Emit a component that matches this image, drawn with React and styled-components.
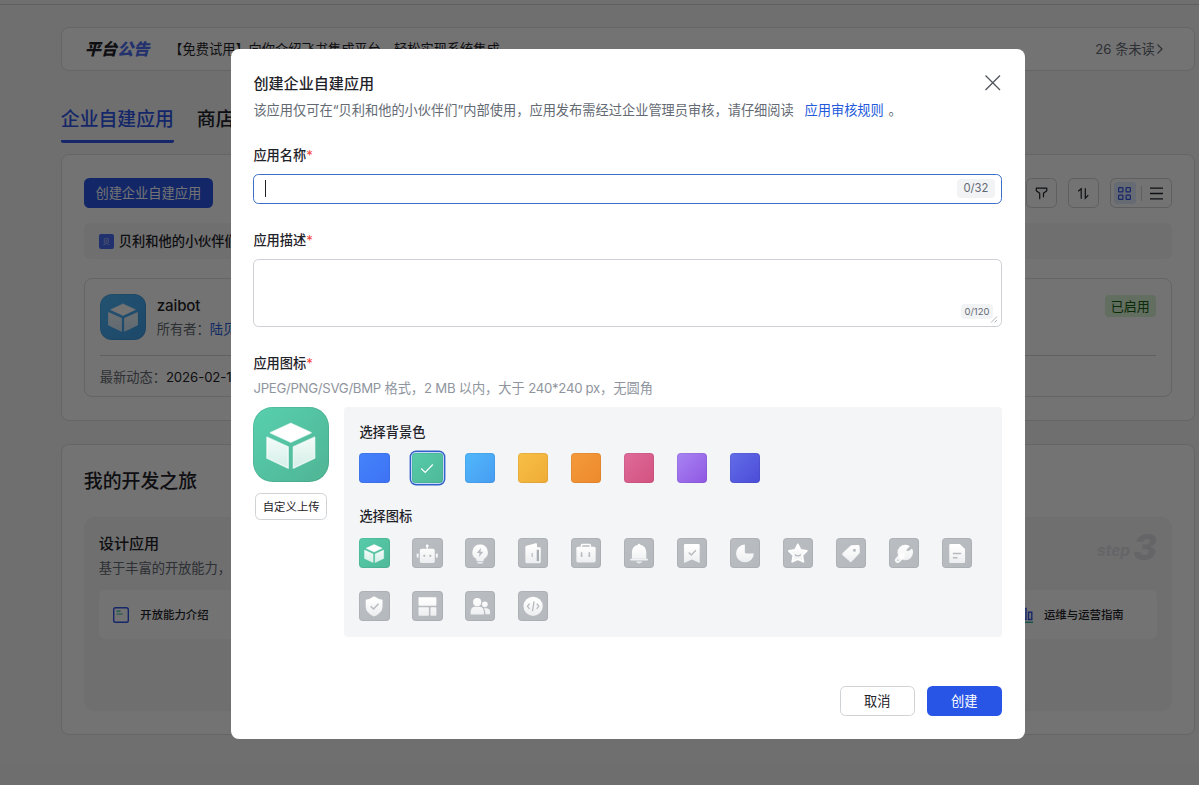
import React from "react"
import styled, { createGlobalStyle, css } from "styled-components"

const GlobalStyle = createGlobalStyle`
    * {
        box-sizing: border-box;
    }
    body {
        margin: 0;
        overflow: hidden;
        font-family: Inter, "Noto Sans CJK SC", sans-serif;
        font-size: 13.23px;
        line-height: 20px;
        color: #1f2329;
        background: #f2f3f5;
    }
    h1, h2, h3, h4, p {
        margin: 0;
        font-weight: 500;
    }
    button {
        font: inherit;
        padding: 0;
        cursor: pointer;
    }
`
const StyledPage = styled.div`
    position: relative;
    height: 785px;
    overflow: hidden;
    background: #f5f5f6;
`
const StyledTopBar = styled.div`
    height: 5px;
    border-bottom: 1px solid #d0d3d6;
`
const StyledMain = styled.main`
    width: 1134px;
    margin: 22px 0 0 60.8px;
`
const StyledCard = styled.section`
    height: ${ props => props.$height }px;
    margin-bottom: ${ props => props.$space || 0 }px;
    padding: ${ props => props.$padding || "23px 22px" };
    border: 1px solid #dee0e3;
    border-radius: 8px;
    background: #fff;
`
const StyledNotice = styled(StyledCard)`
    display: flex;
    align-items: center;
    padding: 0 30px 0 23px;
`
const StyledNoticeTitle = styled.h3`
    width: 84.5px;
    font-size: 16.2px;
    font-weight: 800;
    font-style: italic;
    white-space: nowrap;

    span {
        color: #4e6ef2;
    }
`
const StyledUnread = styled.span`
    display: flex;
    align-items: center;
    margin-left: auto;
    color: #646a73;
`
const StyledTabs = styled.nav`
    display: flex;
    gap: 23px;
    height: 39px;
    margin-bottom: 11px;
`
const StyledTab = styled.div`
    padding-top: 1px;
    font-size: 18.85px;
    line-height: 30px;
    font-weight: 500;
    border-bottom: 3px solid ${ props => props.$active ? "#2f54eb" : "transparent" };
    border-radius: 2px;
    color: ${ props => props.$active ? "#3055e8" : "#1f2329" };
`
const StyledToolbar = styled.div`
    display: flex;
    height: 30px;
    gap: 11px;
    margin-bottom: 15px;
`
const StyledPrimary = styled.button`
    width: ${ props => props.$width }px;
    height: 30px;
    border: 0;
    border-radius: 5.5px;
    background: #2955e7;
    color: #fff;
`
const StyledOutline = styled.button`
    width: ${ props => props.$width }px;
    height: ${ props => props.$height || 30 }px;
    border: 1px solid #d0d3d6;
    border-radius: 5.5px;
    background: #fff;
    color: #1f2329;
    font-size: ${ props => props.$small ? "11.4px" : "inherit" };
    line-height: 16px;
`
const StyledTools = styled.div`
    display: flex;
    gap: 11px;
    margin-left: auto;
`
const StyledTool = styled.div`
    display: flex;
    align-items: center;
    justify-content: center;
    width: ${ props => props.$width || 31 }px;
    height: 30px;
    border: 1px solid #d0d3d6;
    border-radius: 5.5px;
`
const StyledView = styled.div`
    display: flex;
    align-items: center;
    justify-content: center;
    width: 22px;
    height: 22px;
    border-radius: 4px;
    background: ${ props => props.$active ? "#e1eaff" : "none" };
`
const StyledSplit = styled.i`
    width: 1px;
    height: 15px;
    margin: 0 4px 0 5px;
    background: #d0d3d6;
`
const StyledTenant = styled.div`
    display: flex;
    align-items: center;
    gap: 5px;
    height: 36px;
    margin-bottom: 19px;
    padding-left: 15px;
    border-radius: 6px;
    background: #f5f6f7;
    font-weight: 500;
`
const StyledTenantLogo = styled.span`
    width: 15px;
    height: 15px;
    border-radius: 2px;
    background: #4a6cf3;
    color: #b9c8ff;
    font-size: 7px;
    line-height: 15px;
    text-align: center;
`
const StyledAppCard = styled.div`
    height: 119px;
    padding: 15px 15px 0;
    border: 1px solid #dee0e3;
    border-radius: 8px;
`
const StyledAppHead = styled.div`
    display: flex;
    height: 62px;
    border-bottom: 1px solid #d3d5d8;
`
const StyledAppInfo = styled.div`
    padding: 1px 0 0 11px;
    color: #646a73;

    h3 {
        font-size: 15.1px;
        line-height: 22px;
        letter-spacing: -.15px;
        color: #1f2329;
    }
    p {
        margin-top: 2px;
        font-weight: 400;
    }
    span {
        color: #245bdb;
    }
`
const StyledTag = styled.span`
    width: 51px;
    height: 22px;
    margin: 1px 0 0 auto;
    border-radius: 4px;
    background: #d9f3d5;
    color: #186010;
    font-size: 13px;
    line-height: 22px;
    text-align: center;
`
const StyledRecent = styled.p`
    margin-top: 11px;
    color: #646a73;

    && {
        font-weight: 400;
    }
    span {
        color: #1f2329;
        letter-spacing: -.1px;
    }
`
const StyledJourneyTitle = styled.h2`
    height: 49px;
    font-size: 18.9px;
    line-height: 28px;
`
const StyledSteps = styled.div`
    display: grid;
    grid-template-columns: repeat(3, 1fr);
    gap: 15px;
`
const StyledStep = styled.div`
    height: 194px;
    padding: 15px;
    border-radius: 11px;
    background: #f5f5f6;
`
const StyledStepHead = styled.div`
    display: flex;
    justify-content: space-between;
    height: 58px;
    white-space: nowrap;

    h3 {
        font-size: 15.1px;
        line-height: 24px;
    }
    p {
        margin-top: 2px;
        color: #646a73;
        font-weight: 400;
    }
`
const StyledStepNo = styled.div`
    display: flex;
    align-items: center;
    gap: 3px;
    height: 30px;
    font-style: italic;
    font-weight: 700;
    font-size: 15.5px;
    line-height: 30px;
    color: #dfe1e5;

    span {
        padding-top: 8px;
    }
    b {
        font-size: 36px;
        font-weight: 800;
    }
`
const StyledGuides = styled.div`
    display: grid;
    grid-template-columns: 1fr 1fr;
    gap: 14px;
`
const StyledGuide = styled.div`
    display: flex;
    align-items: center;
    gap: 10px;
    height: 49px;
    padding-left: 13.5px;
    border-radius: 6px;
    background: #fff;
    font-size: 11.4px;
    font-weight: 500;
    white-space: nowrap;
`

// dialog
const StyledMask = styled.div`
    position: absolute;
    inset: 0;
    padding: 49px 0 0 231px;
    background: rgba(0, 0, 0, .55);
`
const StyledDialog = styled.div`
    display: flex;
    flex-direction: column;
    width: 794px;
    height: 690px;
    padding: 23.3px 23px 23px 22.4px;
    border-radius: 8px;
    background: #fff;
`
const StyledDialogHead = styled.header`
    display: flex;
    justify-content: space-between;
    height: 72px;

    h2 {
        font-size: 15.1px;
        line-height: 23px;
    }
    p {
        margin-top: 5px;
        color: #646a73;
        font-weight: 400;
        white-space: nowrap;
    }
    a {
        margin: 0 1px 0 7px;
        color: #245bdb;
    }
`
const StyledLabel = styled.label`
    height: 23px;
    font-weight: 500;
    line-height: 23px;

    span {
        color: #f54a45;
        font-weight: 400;
    }
`
const fieldStyle = css`
    display: flex;
    justify-content: flex-end;
    border: 1px solid #cdd0d4;
    border-radius: 5.5px;
`
const StyledInput = styled.div`
    ${fieldStyle}
    align-items: center;
    height: 30px;
    margin: 6.6px 0 25.4px;
    padding: 0 6.5px 0 11px;
    border-color: #3c6fc9;
`
const StyledCaret = styled.i`
    width: 1px;
    height: 17px;
    margin-right: auto;
    background: #1f2329;
`
const StyledTextarea = styled.div`
    ${fieldStyle}
    align-items: flex-end;
    height: 68px;
    margin: 6.6px 0 25.4px;
    padding: 0 3.5px 3px 0;
`
const StyledCount = styled.span`
    padding: 0 ${ props => props.$small ? 3 : 6 }px;
    border-radius: 4px;
    background: #f2f3f5;
    color: #646a73;
    font-size: ${ props => props.$small ? 9.5 : 11.3 }px;
    line-height: ${ props => props.$small ? 15 : 19 }px;
    margin-bottom: ${ props => props.$small ? 4 : 0 }px;
`
const StyledHint = styled.p`
    height: 31.3px;
    padding-top: 3px;
    color: #8f959e;

    && {
        font-weight: 400;
    }
    span {
        letter-spacing: -.3px;
    }
`
const StyledIconArea = styled.div`
    display: flex;
    align-items: flex-start;
    gap: 15px;
`
const StyledPreview = styled.div`
    display: flex;
    flex-direction: column;
    align-items: center;
    gap: 11px;
    width: 75.6px;
`
const StyledAppIcon = styled.div`
    width: ${ props => props.$size }px;
    height: ${ props => props.$size }px;
    flex: none;
    border-radius: ${ props => props.$size * 0.26 }px;
    background: ${ props => props.$background };
    box-shadow: inset 0 0 0 1px rgba(0, 0, 0, .07);

    svg {
        display: block;
    }
`
const StyledPicker = styled.div`
    flex: 1;
    height: 230px;
    padding: 13px 15px 0 15.4px;
    border-radius: 4px;
    background: #f4f5f7;

    h4 {
        line-height: 24px;
        margin-bottom: 9.6px;
    }
`
const StyledSwatches = styled.div`
    display: flex;
    flex-wrap: wrap;
    gap: 22.7px;
    margin-bottom: 21px;
`
const StyledSwatch = styled.div`
    display: flex;
    align-items: center;
    justify-content: center;
    width: 30.24px;
    height: 30.24px;
    border-radius: 4px;
    background: linear-gradient(135deg, ${ props => props.$from }, ${ props => props.$to });
    box-shadow: inset 0 0 0 1px rgba(0, 0, 0, .06)${ props => props.$active ? ", 0 0 0 1px #c5d8fb, 0 0 0 2.4px #2f62c8" : "" };

    svg {
        display: block;
    }
`
const StyledFooter = styled.footer`
    display: flex;
    justify-content: flex-end;
    gap: 11.5px;
    margin-top: auto;
`

const CUT = "#b7bbc0"

const Cube = () => (
    <g strokeWidth=".6" strokeLinejoin="round" stroke="#fff" strokeOpacity=".7">
        <path d="M16 6.9l8.6 4-8.6 4-8.6-4z" fill="#fff" />
        <path d="M5.9 12.8l9 4.1v9l-9-4.3zM17.1 16.9l9-4.1v8.8l-9 4.3z" />
    </g>
)
const glyphs = {
    cube: <Cube />,
    robot: <>
        <path d="M15.5 9h1.2v3h-1.2z" />
        <circle cx="16.1" cy="8.4" r="1.5" />
        <rect x="8.3" y="11.4" width="15.8" height="15" rx="1.8" />
        <rect x="5" y="16.3" width="2" height="4.6" rx=".8" />
        <rect x="25.3" y="16.3" width="2" height="4.6" rx=".8" />
        <circle cx="13" cy="18.8" r="1.2" fill={CUT} />
        <circle cx="19.4" cy="18.8" r="1.2" fill={CUT} />
    </>,
    bulb: <>
        <path d="M16 7a8.1 8.1 0 0 1 4.3 15l-.8 2.6h-7l-.8-2.6A8.1 8.1 0 0 1 16 7z" />
        <rect x="13" y="25.4" width="6" height="1.6" rx=".8" />
        <path d="M17 10.4l-4.5 5.4h2.9l-.7 4.3 4.8-5.6h-3.1z" fill={CUT} />
    </>,
    door: <>
        <path d="M9 8.1l9.7-2.5q1.4-.3 1.4 1.1v3.1h2.800q1.200 0 1.200 1.200v14.400q0 1.200-1.200 1.200H9q-1.200 0-1.200-1.200V9.500q0-1.100 1.200-1.400z" />
        <path d="M19.8 12.4h2.4v12h-2.4z" fill="#a9adb2" />
        <path d="M15 16.3v3.4" stroke={CUT} strokeWidth="1.3" strokeLinecap="round" />
    </>,
    briefcase: <>
        <path d="M11 9.5V8q0-1.1 1.1-1.1h7.3q1.1 0 1.1 1.1v1.5" fill="none" stroke="#fff" strokeWidth="1.5" />
        <rect x="5.7" y="9.2" width="20.4" height="16.6" rx="1.6" />
        <path d="M11.2 15v5M19.4 15v5" stroke={CUT} strokeWidth="1.7" />
    </>,
    bell: <>
        <path d="M16 6.2q1.2 0 1.5 1.1c4.1.7 6.1 4 6.1 8v6.7H8.4v-6.7c0-4 2-7.3 6.1-8Q14.8 6.2 16 6.2z" />
        <rect x="6.4" y="21.9" width="19" height="1.8" rx=".9" />
        <path d="M12.6 25h6.8q-.8 1.9-3.4 1.9T12.6 25z" />
    </>,
    bookmark: <>
        <path d="M8.6 6.4h14.2q1.2 0 1.2 1.2v18.9l-8.2-3.7-8.4 3.7V7.6q0-1.2 1.2-1.2z" />
        <path d="M12.4 15.3l2.8 2.7 4.7-5" fill="none" stroke={CUT} strokeWidth="1.5" />
    </>,
    pie: <path d="M15.7 6.9v8.2q0 1.2 1.2 1.2h8.3A9.4 9.4 0 1 1 15.7 6.9z" />,
    star: <>
        <path d="M15.7 6.7l2.9 5.9 6.6 1-4.8 4.7 1.2 6.9-5.9-2.9-5.9 2.9 1.2-6.9-4.8-4.7 6.6-1z" stroke="#fff" strokeWidth="1.9" strokeLinejoin="round" />
        <path d="M12.5 17.4q3.2 3.1 6.5 0" fill="none" stroke={CUT} strokeWidth="1.3" />
    </>,
    tag: <>
        <path d="M16.7 7.7l6.6-.3q1.5 0 1.6 1.5l.3 6q0 .8-.5 1.4l-8 8.7q-1.1 1.2-2.2 0l-7.4-6.8q-1.2-1.1 0-2.2l8.2-7.8q.6-.5 1.4-.5z" />
        <circle cx="19.5" cy="13" r="1.6" fill={CUT} />
    </>,
    wrench: <>
        <circle cx="17.2" cy="15.3" r="8.2" />
        <path d="M13.5 18.8l-4.2 4.6" stroke="#fff" strokeOpacity=".85" strokeWidth="6" strokeLinecap="round" />
        <path d="M18.4 13.7q.2-2 1.8-3.2l3.2-3.2 2.4 2.4-3.3 3.1q-1.7 1.4-4.1.9z" fill={CUT} />
        <circle cx="9.4" cy="23.5" r=".8" fill={CUT} />
    </>,
    doc: <>
        <path d="M8.9 6.4h9.9l5.6 5.3v13.6q0 1.2-1.2 1.2H8.9q-1.2 0-1.2-1.2V7.6q0-1.2 1.2-1.2z" />
        <path d="M11.5 16.4h8.8M11.5 20.9h4.8" stroke={CUT} strokeWidth="1.4" />
    </>,
    shield: <>
        <path d="M16 5.5q4.2 3 8.9 3.7v7.2q0 6.9-8.9 10.5-8.9-3.6-8.9-10.5V9.2Q11.8 8.5 16 5.5z" />
        <path d="M12.3 16.2l3.1 2.9 5.3-5.5" fill="none" stroke={CUT} strokeWidth="1.6" />
    </>,
    layout: <>
        <rect x="6.9" y="6.6" width="18.9" height="8.9" rx=".8" />
        <rect x="6.9" y="17.1" width="11" height="9" rx=".8" />
        <rect x="19.5" y="17.1" width="6.3" height="9" rx=".8" />
    </>,
    people: <>
        <circle cx="12.9" cy="11.8" r="4.3" />
        <circle cx="21" cy="14.1" r="3" />
        <path d="M5.9 24v-1.2q0-6 5-6h4.2q5 0 5 6V24q0 1-1 1H6.9q-1 0-1-1z" />
        <path d="M21.4 24.6v-1.9q0-2.7-1.5-4.4h2.2q4.5 0 4.5 4.3v1.2q0 .8-.8.8z" />
    </>,
    code: <>
        <circle cx="16" cy="16.2" r="10.2" />
        <path d="M12.2 13.4L10 16.2l2.2 2.8M19.8 13.4l2.2 2.8-2.2 2.8M17 10.9l-1.7 10.5" fill="none" stroke={CUT} strokeWidth="1.4" />
    </>,
}

const Glyph = ({ name, size = 30.24 }) => (
    <svg width={size} height={size} viewBox="0 0 32 32">
        <defs>
            <linearGradient id={"fade-" + name} gradientUnits="userSpaceOnUse" x1="0" y1="8" x2="0" y2="28">
                <stop stopColor="#fff" />
                <stop offset="1" stopColor="#fff" stopOpacity=".72" />
            </linearGradient>
        </defs>
        <g fill={`url(#fade-${name})`}>{glyphs[name]}</g>
    </svg>
)

const colors = [
    ["#4583fb", "#3d72f4"],
    ["#56cbaa", "#4fb998"],
    ["#50b8fb", "#489cf2"],
    ["#f7bf45", "#efac37"],
    ["#f49a3b", "#ec8a2c"],
    ["#df6b9a", "#d2527f"],
    ["#a883f3", "#8f58e2"],
    ["#646de9", "#4a4cd6"],
]
const greens = colors[1]

const Toolbar = () => (
    <StyledToolbar>
        <StyledPrimary $width={129}>创建企业自建应用</StyledPrimary>
        <StyledTools>
            <StyledTool>
                <svg width="15" height="15" viewBox="0 0 15 15" fill="none" stroke="#1f2329" strokeWidth="1.2" strokeLinejoin="round" strokeLinecap="round">
                    <path d="M5.7 12.7V7.2L2.3 4.7V2.2h10.5v2.5L9.5 7.2v3.6" />
                </svg>
            </StyledTool>
            <StyledTool>
                <svg width="15" height="15" viewBox="0 0 15 15" fill="none" stroke="#1f2329" strokeWidth="1.2">
                    <path d="M2.2 5.2l3-2.5v10M9.3 2.2v10l3-3" />
                </svg>
            </StyledTool>
            <StyledTool $width={62}>
                <StyledView $active>
                    <svg width="15" height="15" viewBox="0 0 15 15" fill="none" stroke="#3055e8" strokeWidth="1.2">
                        <rect x="1.6" y="1.6" width="4.3" height="4.3" rx=".6" />
                        <rect x="9.1" y="1.6" width="4.3" height="4.3" rx=".6" />
                        <rect x="1.6" y="9.1" width="4.3" height="4.3" rx=".6" />
                        <rect x="9.1" y="9.1" width="4.3" height="4.3" rx=".6" />
                    </svg>
                </StyledView>
                <StyledSplit />
                <StyledView>
                    <svg width="15" height="15" viewBox="0 0 15 15" stroke="#1f2329" strokeWidth="1.3">
                        <path d="M1 2.2h13M1 7.5h13M1 12.8h13" />
                    </svg>
                </StyledView>
            </StyledTool>
        </StyledTools>
    </StyledToolbar>
)

const Apps = () => (
    <StyledCard $height={267} $space={23}>
        <Toolbar />
        <StyledTenant>
            <StyledTenantLogo>贝</StyledTenantLogo>
            贝利和他的小伙伴们
        </StyledTenant>
        <StyledAppCard>
            <StyledAppHead>
                <StyledAppIcon $size={46} $background="linear-gradient(135deg, #50b8fb, #3f9fe8)">
                    <Glyph name="cube" size={46} />
                </StyledAppIcon>
                <StyledAppInfo>
                    <h3>zaibot</h3>
                    <p>所有者：<span>陆贝</span></p>
                </StyledAppInfo>
                <StyledTag>已启用</StyledTag>
            </StyledAppHead>
            <StyledRecent>最新动态：<span>2026-02-11</span></StyledRecent>
        </StyledAppCard>
    </StyledCard>
)

const DocIcon = () => (
    <svg width="18" height="18" viewBox="0 0 18 18" fill="none" strokeWidth="1.4">
        <rect x="1.7" y="1.7" width="14.6" height="14.6" rx="1.8" stroke="#3055e8" />
        <path d="M4.5 5.2h4M4.5 8h6.2" stroke="#2eb8a0" strokeWidth="1.2" />
    </svg>
)
const ChartIcon = () => (
    <svg width="18" height="18" viewBox="0 0 18 18" fill="none" strokeWidth="1.4">
        <path d="M2 13.5V8h3v5.5zM7 13.5v-11h3v11zM12.5 13.5V6.2h3.3v7.3z" stroke="#3055e8" />
        <path d="M1 16.3h16" stroke="#2eb8a0" />
    </svg>
)

const Journey = () => (
    <StyledCard $height={291}>
        <StyledJourneyTitle>我的开发之旅</StyledJourneyTitle>
        <StyledSteps>
            <StyledStep>
                <StyledStepHead>
                    <div>
                        <h3>设计应用</h3>
                        <p>基于丰富的开放能力，</p>
                    </div>
                </StyledStepHead>
                <StyledGuides>
                    <StyledGuide><DocIcon />开放能力介绍</StyledGuide>
                </StyledGuides>
            </StyledStep>
            <StyledStep />
            <StyledStep>
                <StyledStepHead>
                    <div />
                    <StyledStepNo><span>step</span><b>3</b></StyledStepNo>
                </StyledStepHead>
                <StyledGuides>
                    <StyledGuide />
                    <StyledGuide><ChartIcon />运维与运营指南</StyledGuide>
                </StyledGuides>
            </StyledStep>
        </StyledSteps>
    </StyledCard>
)

const IconPicker = () => (
    <StyledPicker>
        <h4>选择背景色</h4>
        <StyledSwatches>
            {colors.map(([from, to], i) => (
                <StyledSwatch key={from} $from={from} $to={to} $active={i === 1}>
                    {i === 1 && (
                        <svg width="14" height="11" viewBox="0 0 14 11" fill="none" stroke="#fff" strokeWidth="1.1">
                            <path d="M1.2 5.5l4 3.9 7.6-7.9" />
                        </svg>
                    )}
                </StyledSwatch>
            ))}
        </StyledSwatches>
        <h4>选择图标</h4>
        <StyledSwatches>
            {Object.keys(glyphs).map((name, i) => (
                <StyledSwatch key={name} $from={i ? "#babec3" : greens[0]} $to={i ? "#b5b9be" : greens[1]}>
                    <Glyph name={name} />
                </StyledSwatch>
            ))}
        </StyledSwatches>
    </StyledPicker>
)

const CreateDialog = () => (
    <StyledMask>
        <StyledDialog>
            <StyledDialogHead>
                <div>
                    <h2>创建企业自建应用</h2>
                    <p>该应用仅可在“贝利和他的小伙伴们”内部使用，应用发布需经过企业管理员审核，请仔细阅读 <a>应用审核规则</a> 。</p>
                </div>
                <svg width="18" height="22" viewBox="0 0 18 22" stroke="#51565d" strokeWidth="1.3">
                    <path d="M1.5 3.500l14.500 14.500M16 3.500L1.500 18" />
                </svg>
            </StyledDialogHead>
            <StyledLabel>应用名称<span>*</span></StyledLabel>
            <StyledInput>
                <StyledCaret />
                <StyledCount>0/32</StyledCount>
            </StyledInput>
            <StyledLabel>应用描述<span>*</span></StyledLabel>
            <StyledTextarea>
                <StyledCount $small>0/120</StyledCount>
                <svg width="8" height="8" viewBox="0 0 8 8" stroke="#8f959e" strokeWidth=".7" style={{ marginLeft: -3 }}>
                    <path d="M1 7.5l6-6M4.5 7.5L7 5" />
                </svg>
            </StyledTextarea>
            <StyledLabel>应用图标<span>*</span></StyledLabel>
            <StyledHint>
                <span>JPEG/PNG/SVG/BMP </span>格式，<span>2 MB </span>以内，大于<span> 240*240 px</span>，无圆角
            </StyledHint>
            <StyledIconArea>
                <StyledPreview>
                    <StyledAppIcon $size={75.6} $background="linear-gradient(135deg, #58d0af, #4fb494)">
                        <Glyph name="cube" size={75.6} />
                    </StyledAppIcon>
                    <StyledOutline $width={72} $height={27} $small>自定义上传</StyledOutline>
                </StyledPreview>
                <IconPicker />
            </StyledIconArea>
            <StyledFooter>
                <StyledOutline $width={75.5}>取消</StyledOutline>
                <StyledPrimary $width={75.5}>创建</StyledPrimary>
            </StyledFooter>
        </StyledDialog>
    </StyledMask>
)

const App = () => (
    <StyledPage>
        <GlobalStyle />
        <StyledTopBar />
        <StyledMain>
            <StyledNotice $height={44} $space={33}>
                <StyledNoticeTitle>平台<span>公告</span></StyledNoticeTitle>
                <span>【免费试用】向你介绍飞书集成平台，轻松实现系统集成</span>
                <StyledUnread>
                    26 条未读
                    <svg width="9" height="12" viewBox="0 0 9 12" fill="none" stroke="#646a73" strokeWidth="1.2">
                        <path d="M2.5 1.5L7 6l-4.5 4.5" />
                    </svg>
                </StyledUnread>
            </StyledNotice>
            <StyledTabs>
                <StyledTab $active>企业自建应用</StyledTab>
                <StyledTab>商店应用</StyledTab>
            </StyledTabs>
            <Apps />
            <Journey />
        </StyledMain>
        <CreateDialog />
    </StyledPage>
)

export default App
